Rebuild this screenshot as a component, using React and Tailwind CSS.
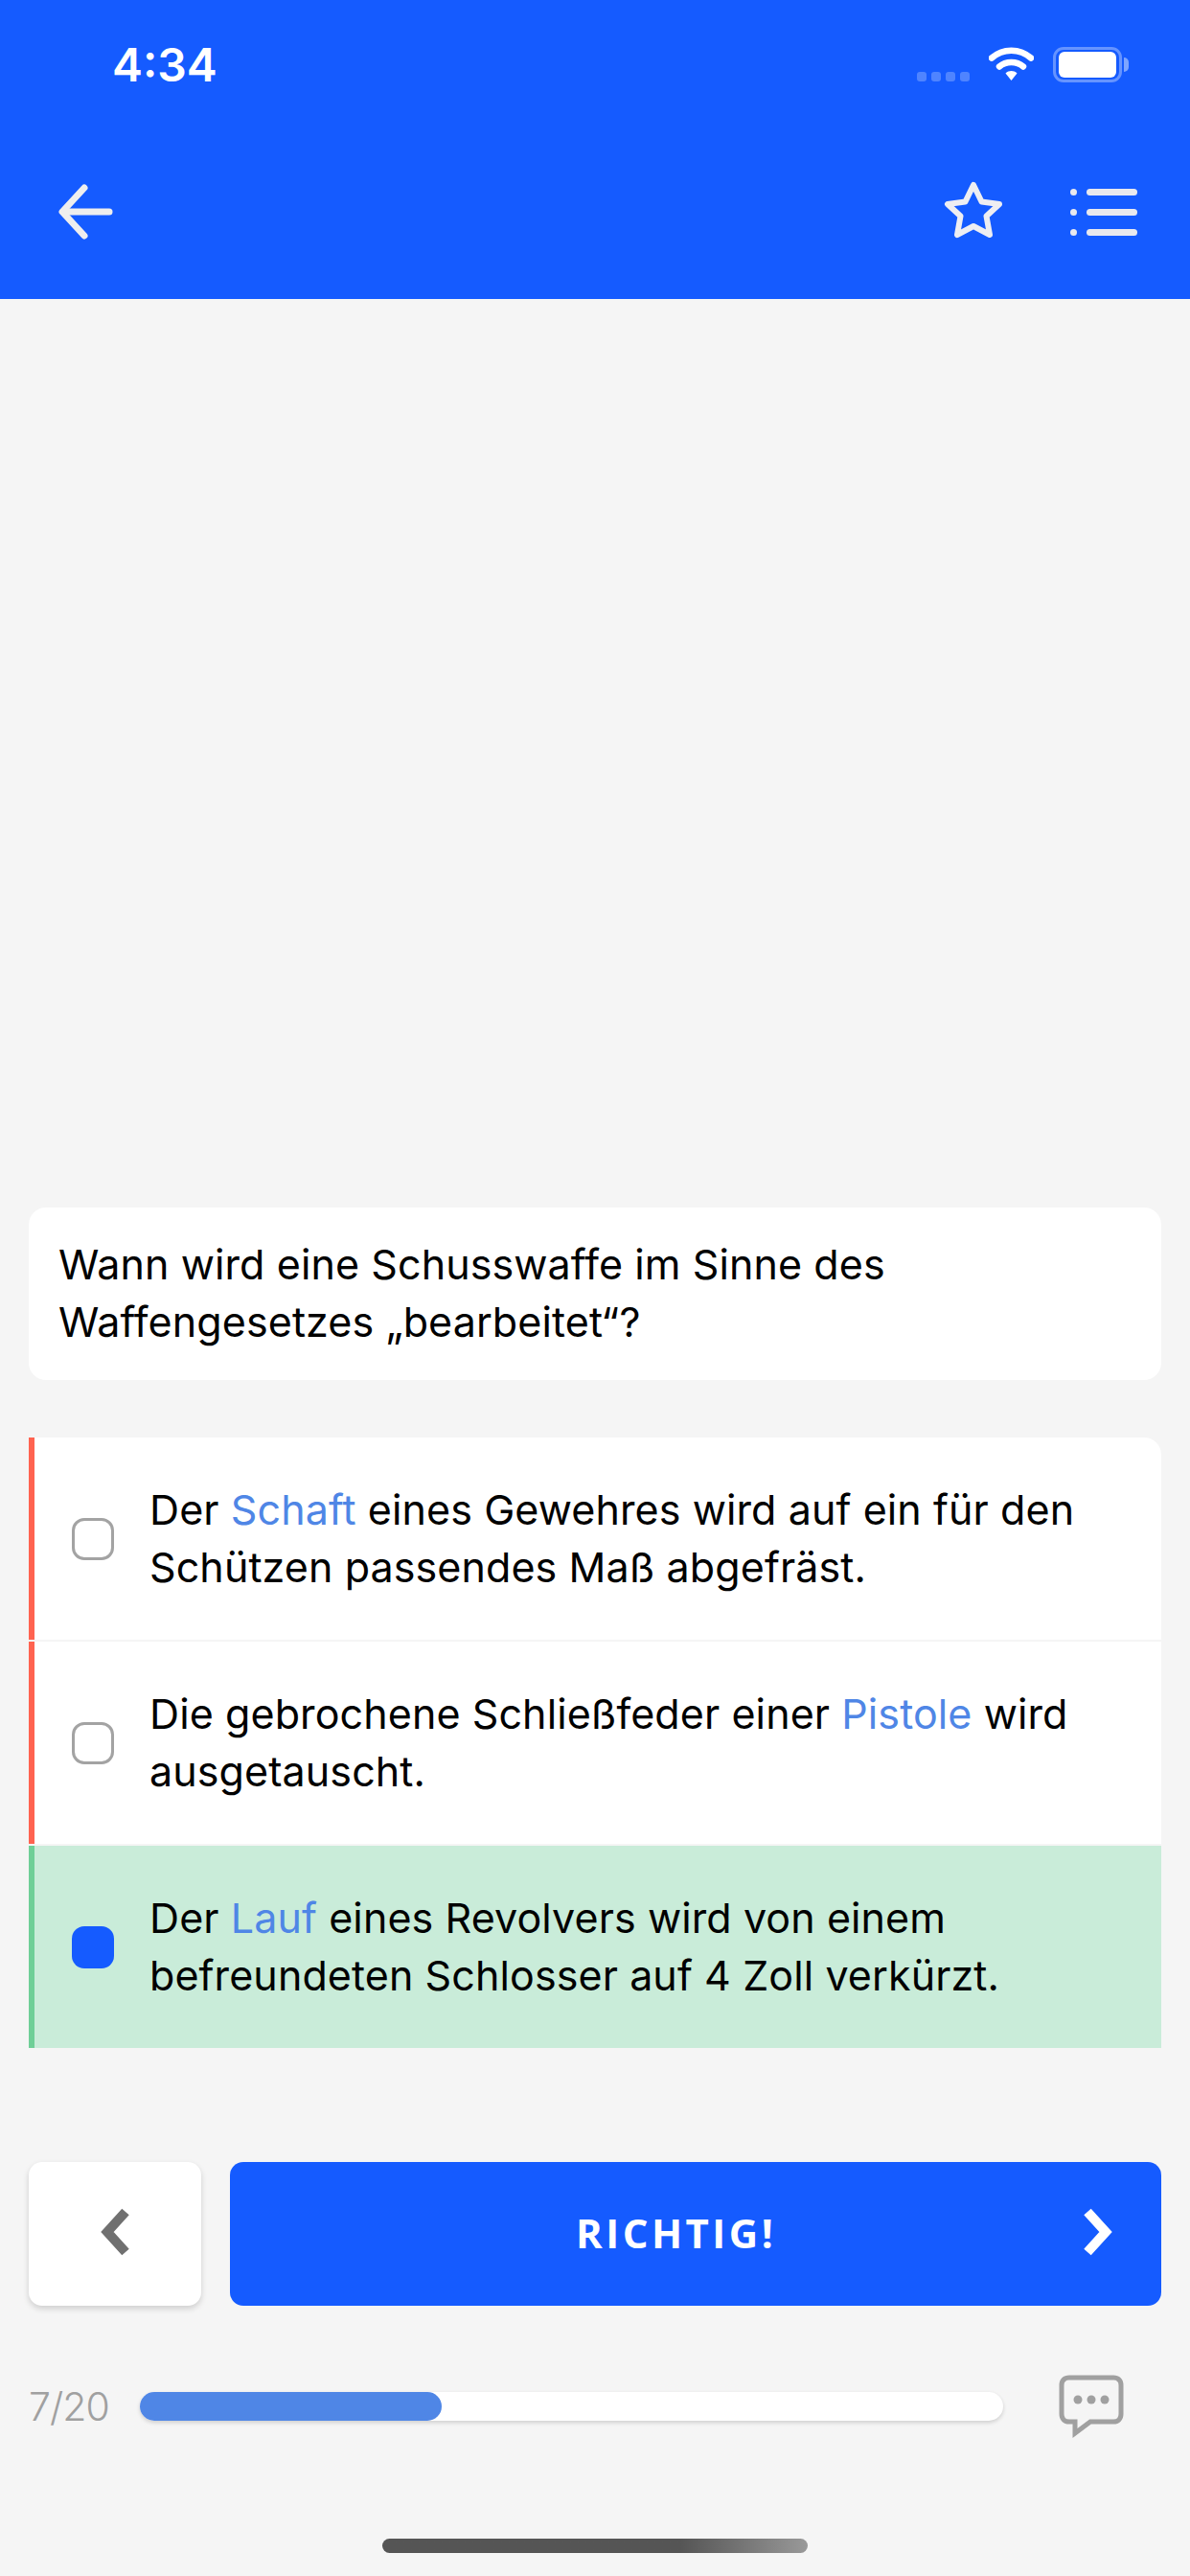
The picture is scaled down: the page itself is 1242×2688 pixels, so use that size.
const sans = "font-['Inter','Liberation_Sans',sans-serif]";

function Option({ stripe, bg, selected, divider, rounded, children }) {
  return (
    <div className={`flex h-[211px] items-center border-l-[6px] pl-[39px] pr-[20px] ${stripe} ${bg} ${divider ? "mb-[2px]" : ""} ${rounded ? "rounded-tr-[18px]" : ""}`}>
      <div className={`h-[44px] w-[44px] shrink-0 rounded-[13px] ${selected ? "bg-[#155bff]" : "border-[3px] border-[#a3a3a3]"}`} />
      <p className="mb-[2px] ml-[37px] text-[43px] leading-[60px] tracking-[0.1px] text-black">{children}</p>
    </div>
  );
}

const Link = ({ children }) => <span className="text-[#4f86e6]">{children}</span>;

export default function App() {
  return (
    <div className={`flex h-[2688px] w-[1242px] flex-col overflow-hidden bg-[#f5f5f5] ${sans}`}>
      <header className="h-[312px] shrink-0 bg-[#155bff]">
        <div className="flex h-[132px] items-start pl-[117px] pr-[64px]">
          <span className="mt-[41px] text-[48px] font-semibold leading-[54px] text-white">4:34</span>
          <div className="ml-auto mt-[49px] flex items-start">
            <div className="mt-[26px] flex gap-[5px]">
              <i className="h-[10px] w-[10px] rounded-[3px] bg-white/25" />
              <i className="h-[10px] w-[10px] rounded-[3px] bg-white/25" />
              <i className="h-[10px] w-[10px] rounded-[3px] bg-white/25" />
              <i className="h-[10px] w-[10px] rounded-[3px] bg-white/25" />
            </div>
            <svg className="ml-[20px]" width="47" height="36" viewBox="0 0 47 36" fill="none">
              <path d="M3 11.5C14.5 1 32.5 1 44 11.5" stroke="#fff" strokeWidth="6.5" strokeLinecap="round" />
              <path d="M11 20.5C18 14.5 29 14.5 36 20.5" stroke="#fff" strokeWidth="6.5" strokeLinecap="round" />
              <path d="M17.5 27.5C21 24.3 26 24.3 29.5 27.5L23.5 35Z" fill="#fff" />
            </svg>
            <div className="ml-[20px] flex h-[37px] w-[72px] items-center justify-center rounded-[11px] border-[3px] border-white/35">
              <div className="h-[27px] w-[60px] rounded-[6px] bg-white" />
            </div>
            <div className="ml-[2px] mt-[11px] h-[15px] w-[5px] rounded-r-full bg-white/45" />
          </div>
        </div>
        <div className="flex h-[178px] items-start pl-[58px] pr-[55px] pt-[58px]">
          <svg className="-mt-[1px]" width="64" height="64" viewBox="0 0 64 64" fill="none" stroke="#eeeeee" strokeWidth="7" strokeLinecap="round" strokeLinejoin="round">
            <path d="M30 7L7 32L30 57" />
            <path d="M8 32H56" />
          </svg>
          <svg className="ml-auto -mt-[1px]" width="62" height="61" viewBox="0 0 62 61" fill="none" stroke="#eeeef2" strokeWidth="6" strokeLinejoin="round">
            <path d="M31 4L39.5 21.5L58 24L44.5 36.5L48 56L31 47L14 56L17.5 36.5L4 24L22.5 21.5Z" />
          </svg>
          <div className="ml-[70px] mt-[7px] flex w-[70px] flex-col gap-[14px]">
            <div className="flex items-center gap-[10px]"><i className="h-[7px] w-[7px] rounded-full bg-[#e9e9ee]" /><i className="h-[7px] w-[53px] rounded-full bg-[#e9e9ee]" /></div>
            <div className="flex items-center gap-[10px]"><i className="h-[7px] w-[7px] rounded-full bg-[#e9e9ee]" /><i className="h-[7px] w-[53px] rounded-full bg-[#e9e9ee]" /></div>
            <div className="flex items-center gap-[10px]"><i className="h-[7px] w-[7px] rounded-full bg-[#e9e9ee]" /><i className="h-[7px] w-[53px] rounded-full bg-[#e9e9ee]" /></div>
          </div>
        </div>
      </header>

      <main className="flex flex-1 flex-col px-[30px] pt-[948px]">
        <section className="rounded-[18px] bg-white px-[31px] pb-[31px] pt-[29px]">
          <p className="text-[43px] leading-[60px] tracking-[0.1px] text-black">
            Wann wird eine Schusswaffe im Sinne des<br />Waffengesetzes „bearbeitet“?
          </p>
        </section>

        <section className="mt-[60px]">
          <Option stripe="border-[#ff6350]" bg="bg-white" divider rounded>
            Der <Link>Schaft</Link> eines Gewehres wird auf ein für den<br />Schützen passendes Maß abgefräst.
          </Option>
          <Option stripe="border-[#ff6350]" bg="bg-white" divider>
            Die gebrochene Schließfeder einer <Link>Pistole</Link> wird<br />ausgetauscht.
          </Option>
          <Option stripe="border-[#6fcf97]" bg="bg-[#c9ecd9]" selected>
            Der <Link>Lauf</Link> eines Revolvers wird von einem<br />befreundeten Schlosser auf 4 Zoll verkürzt.
          </Option>
        </section>

        <section className="mt-[119px] flex gap-[30px]">
          <button className="flex h-[150px] w-[180px] shrink-0 items-center justify-center rounded-[14px] bg-white shadow-[0_3px_6px_rgba(0,0,0,0.16)]">
            <svg className="mb-[4px]" width="36" height="50" viewBox="0 0 36 50" fill="none" stroke="#707070" strokeWidth="10" strokeLinejoin="miter">
              <path d="M29 4L10 25L29 46" />
            </svg>
          </button>
          <button className="flex h-[150px] flex-1 items-center rounded-[14px] bg-[#155bff] pl-[361px] pr-[48px]">
            <span className="mb-[2px] font-['Open_Sans',sans-serif] text-[42px] font-bold leading-[50px] tracking-[3.5px] text-white">RICHTIG!</span>
            <svg className="mb-[4px] ml-auto" width="36" height="50" viewBox="0 0 36 50" fill="none" stroke="#ffffff" strokeWidth="10" strokeLinejoin="miter">
              <path d="M7 4L26 25L7 46" />
            </svg>
          </button>
        </section>

        <section className="mt-[72px] flex items-start">
          <span className="mt-[8px] w-[116px] shrink-0 text-[41px] font-light leading-[50px] tracking-[-1px] text-[#a0a0a0]">7/20</span>
          <div className="mt-[18px] h-[30px] w-[901px] shrink-0 rounded-full bg-white shadow-[0_2px_4px_rgba(0,0,0,0.16)]">
            <div className="h-full w-[315px] rounded-full bg-[#4f86e6]" />
          </div>
          <svg className="ml-[58px] shrink-0" width="68" height="66" viewBox="0 0 68 66" fill="none">
            <path d="M11 3H57C62 3 65 6 65 11V41C65 46 62 49 57 49H33L17 61V49H11C6 49 3 46 3 41V11C3 6 6 3 11 3Z" stroke="#a0a0a0" strokeWidth="5" />
            <circle cx="20" cy="26" r="4.5" fill="#a0a0a0" />
            <circle cx="34" cy="26" r="4.5" fill="#a0a0a0" />
            <circle cx="48" cy="26" r="4.5" fill="#a0a0a0" />
          </svg>
        </section>

        <div className="mx-auto mt-[105px] h-[15px] w-[444px] rounded-full bg-gradient-to-r from-[#555555] via-[#555555] via-70% to-[#999999]" />
      </main>
    </div>
  );
}
